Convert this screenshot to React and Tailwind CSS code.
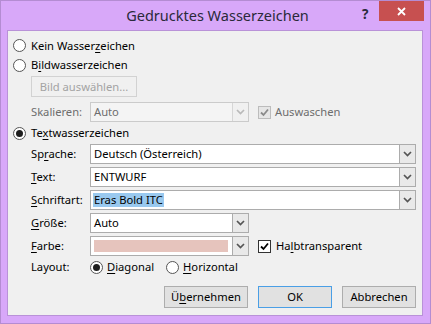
import { clsx } from 'clsx';

const Chevron = ({ disabled }) => (
  <svg width="9" height="6" viewBox="0 0 9 6">
    <polyline points="1,1 4.5,4.5 8,1" fill="none" stroke={disabled ? '#b9b9b9' : '#555'} strokeWidth="1.7" />
  </svg>
);

const Check = ({ disabled }) => (
  <svg width="11" height="11" viewBox="0 0 11 11">
    <polyline points="2,5.5 4.5,8 9,2.5" fill="none" stroke={disabled ? '#8a8a8a' : '#000'} strokeWidth="1.8" />
  </svg>
);

function Radio({ checked }) {
  return (
    <span className="w-[13px] h-[13px] rounded-full border border-[#555] bg-white flex items-center justify-center shrink-0">
      {checked && <span className="w-[7px] h-[7px] rounded-full bg-[#1e1e1e]" />}
    </span>
  );
}

function Checkbox({ checked, disabled }) {
  return (
    <span className={clsx(
      'w-[13px] h-[13px] border flex items-center justify-center shrink-0',
      disabled ? 'border-[#bcbcbc] bg-[#e6e6e6]' : 'border-[#333] bg-white'
    )}>
      {checked && <Check disabled={disabled} />}
    </span>
  );
}

function Combo({ className, children, disabled }) {
  return (
    <div className={clsx(
      'flex h-5 border shrink-0',
      disabled ? 'border-[#cbcbcb] bg-[#f4f4f4]' : 'border-[#acacac] bg-white',
      className
    )}>
      <div className="flex-1 flex items-center pl-[2px] overflow-hidden">{children}</div>
      <div className={clsx(
        'w-4 flex items-center justify-center border-l',
        disabled ? 'border-[#d6d6d6] bg-[#f0f0f0]' : 'border-[#acacac] bg-[#e9e9e9]'
      )}>
        <Chevron disabled={disabled} />
      </div>
    </div>
  );
}

const Label = ({ children, className }) => (
  <span className={clsx('w-[59px] shrink-0', className)}>{children}</span>
);

const U = ({ children }) => <span className="underline underline-offset-[2px] decoration-1">{children}</span>;

export default function App() {
  return (
    <div className="w-[431px] h-[324px] bg-[#d8a8f9] border border-[#b48cd2] flex flex-col font-['Noto_Sans',sans-serif] text-[11.2px] text-black leading-none select-none">
      {/* Title bar */}
      <div className="h-[29px] flex items-start relative">
        <div className="flex-1 h-[29px] flex items-center justify-center pl-[4px] text-[14.5px] text-[#2a2a3a]">
          Gedrucktes Wasserzeichen
        </div>
        <span className="absolute left-[361px] top-[7px] text-[13.5px] font-bold text-[#2a2a3a]">?</span>
        <div className="absolute left-[378px] top-0 w-[45px] h-[20px] bg-[#c75050] flex items-center justify-center">
          <svg width="9" height="9" viewBox="0 0 9 9">
            <path d="M1 1 L8 8 M8 1 L1 8" stroke="#fff" strokeWidth="1.8" />
          </svg>
        </div>
      </div>

      {/* Client area */}
      <div className="ml-[6px] mr-[7px] h-[286px] border border-[#b992d8] bg-[#f0f0f0] flex flex-col pl-[5px]">
        <div className="mt-[5px] h-[19px] flex items-center gap-[5px]">
          <Radio />
          <span>Kein Wasser<U>z</U>eichen</span>
        </div>
        <div className="h-[20px] flex items-center gap-[5px]">
          <Radio />
          <span>B<U>i</U>ldwasserzeichen</span>
        </div>
        <div className="mt-[1px] ml-[18px] w-[106px] h-[21px] border border-[#d2d2d2] bg-[#f0f0f0] flex items-center justify-center text-[#a3a3a3]">
          Bild auswählen...
        </div>
        <div className="mt-[5px] ml-[18px] h-5 flex items-center">
          <Label className="text-[#6d6d6d]">Skalieren:</Label>
          <Combo disabled className="w-[159px]">
            <span className="text-[#6d6d6d] pl-[1px]">Auto</span>
          </Combo>
          <span className="ml-[9px] flex items-center gap-[4px] text-[#6d6d6d]">
            <Checkbox checked disabled />
            Auswaschen
          </span>
        </div>
        <div className="mt-[2px] h-[18px] flex items-center gap-[5px]">
          <Radio checked />
          <span>Te<U>x</U>twasserzeichen</span>
        </div>
        <div className="mt-[2px] ml-[18px] flex items-center">
          <Label>Sp<U>r</U>ache:</Label>
          <Combo className="w-[326px]"><span className="pl-[1px]">Deutsch (Österreich)</span></Combo>
        </div>
        <div className="mt-[3px] ml-[18px] flex items-center">
          <Label><U>T</U>ext:</Label>
          <Combo className="w-[326px]"><span className="pl-[1px]">ENTWURF</span></Combo>
        </div>
        <div className="mt-[3px] ml-[18px] flex items-center">
          <Label><U>S</U>chriftart:</Label>
          <Combo className="w-[326px]">
            <span className="bg-[#99c9ef] h-[14px] flex items-center px-[1px]">Eras Bold ITC</span>
          </Combo>
        </div>
        <div className="mt-[3px] ml-[18px] flex items-center">
          <Label><U>G</U>röße:</Label>
          <Combo className="w-[159px]"><span className="pl-[1px]">Auto</span></Combo>
        </div>
        <div className="mt-[3px] ml-[18px] flex items-center">
          <Label><U>F</U>arbe:</Label>
          <Combo className="w-[159px]">
            <span className="ml-[1px] w-[134px] h-3 bg-[#e6c4bd]" />
          </Combo>
          <span className="ml-[9px] flex items-center gap-[5px]">
            <Checkbox checked />
            <span>Ha<U>l</U>btransparent</span>
          </span>
        </div>
        <div className="mt-[2px] ml-[18px] h-[18px] flex items-center">
          <Label>Layout:</Label>
          <span className="flex items-center gap-[4px]">
            <Radio checked />
            <span><U>D</U>iagonal</span>
          </span>
          <span className="ml-[12px] flex items-center gap-[4px]">
            <Radio />
            <span><U>H</U>orizontal</span>
          </span>
        </div>
        <div className="mt-[10px] flex justify-end gap-[10px] pr-[6px]">
          <div className="w-[84px] h-[22px] border border-[#adadad] bg-[#e1e1e1] flex items-center justify-center">
            <span>Ü<U>b</U>ernehmen</span>
          </div>
          <div className="w-[74px] h-[22px] border border-[#4a9fe6] bg-[#e1e1e1] flex items-center justify-center">
            OK
          </div>
          <div className="w-[74px] h-[22px] border border-[#adadad] bg-[#e1e1e1] flex items-center justify-center">
            Abbrechen
          </div>
        </div>
      </div>
    </div>
  );
}
